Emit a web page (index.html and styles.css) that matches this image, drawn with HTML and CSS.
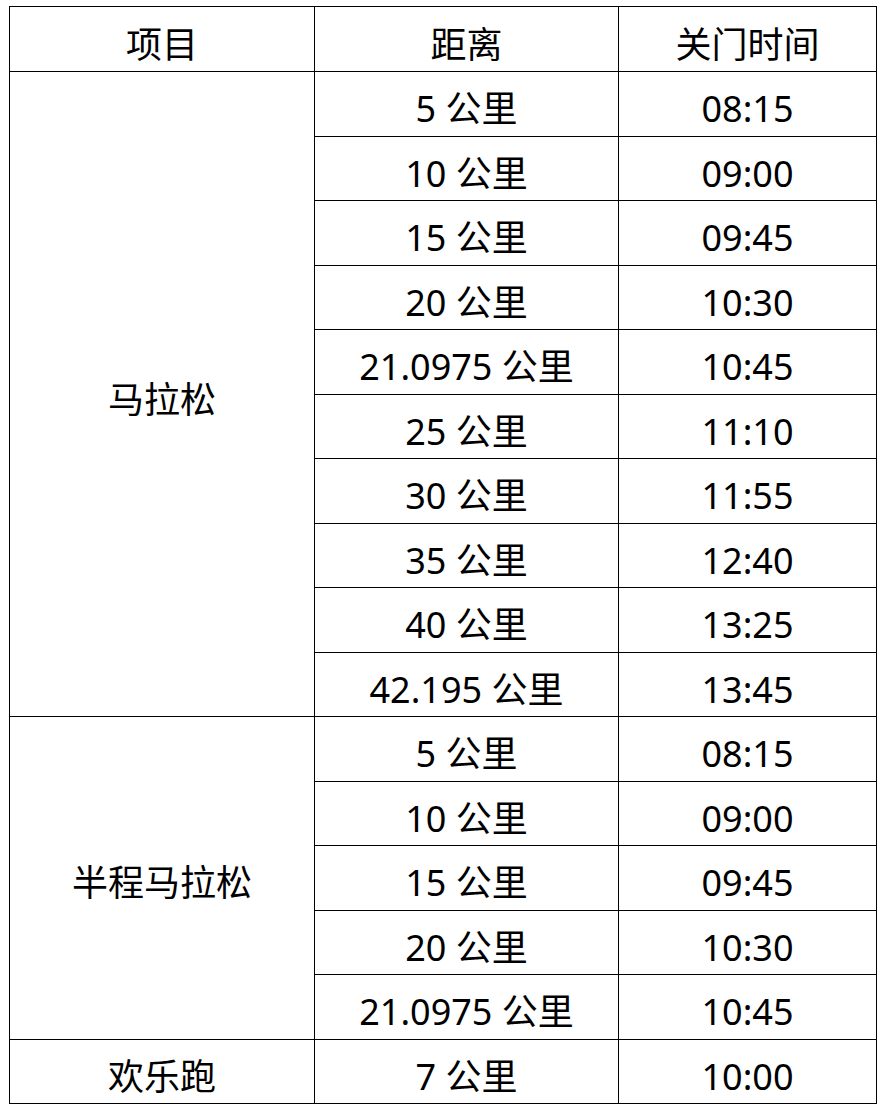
FILE: index.html
```html
<!DOCTYPE html>
<html lang="zh-CN">
<head>
<meta charset="utf-8">
<title>关门时间</title>
<link rel="stylesheet" href="styles.css">
</head>
<body>
<table class="schedule">
  <colgroup>
    <col class="c1"><col class="c2"><col class="c3">
  </colgroup>
  <thead>
    <tr><th>项目</th><th>距离</th><th>关门时间</th></tr>
  </thead>
  <tbody>
    <tr><td rowspan="10">马拉松</td><td>5 公里</td><td>08:15</td></tr>
    <tr><td>10 公里</td><td>09:00</td></tr>
    <tr><td>15 公里</td><td>09:45</td></tr>
    <tr><td>20 公里</td><td>10:30</td></tr>
    <tr><td>21.0975 公里</td><td>10:45</td></tr>
    <tr><td>25 公里</td><td>11:10</td></tr>
    <tr><td>30 公里</td><td>11:55</td></tr>
    <tr><td>35 公里</td><td>12:40</td></tr>
    <tr><td>40 公里</td><td>13:25</td></tr>
    <tr><td>42.195 公里</td><td>13:45</td></tr>
    <tr><td rowspan="5">半程马拉松</td><td>5 公里</td><td>08:15</td></tr>
    <tr><td>10 公里</td><td>09:00</td></tr>
    <tr><td>15 公里</td><td>09:45</td></tr>
    <tr><td>20 公里</td><td>10:30</td></tr>
    <tr><td>21.0975 公里</td><td>10:45</td></tr>
    <tr><td>欢乐跑</td><td>7 公里</td><td>10:00</td></tr>
  </tbody>
</table>
</body>
</html>
```
FILE: styles.css
```css
html, body {
  margin: 0;
  padding: 0;
  background: #ffffff;
}
body {
  padding: 6px 0 0 9px;
  font-family: "Noto Sans", "Noto Sans CJK SC", sans-serif;
  color: #000;
}
.schedule {
  border-collapse: collapse;
  table-layout: fixed;
  width: 867px;
}
.schedule .c1 { width: 305px; }
.schedule .c2 { width: 304px; }
.schedule .c3 { width: 258px; }
.schedule th,
.schedule td {
  border: 1px solid #000;
  box-sizing: border-box;
  height: 64.5px;
  padding: 11px 0 0;
  text-align: center;
  vertical-align: middle;
  font-size: 36px;
  font-weight: normal;
  line-height: 40px;
}
.schedule th {
  height: 65px;
}
```
